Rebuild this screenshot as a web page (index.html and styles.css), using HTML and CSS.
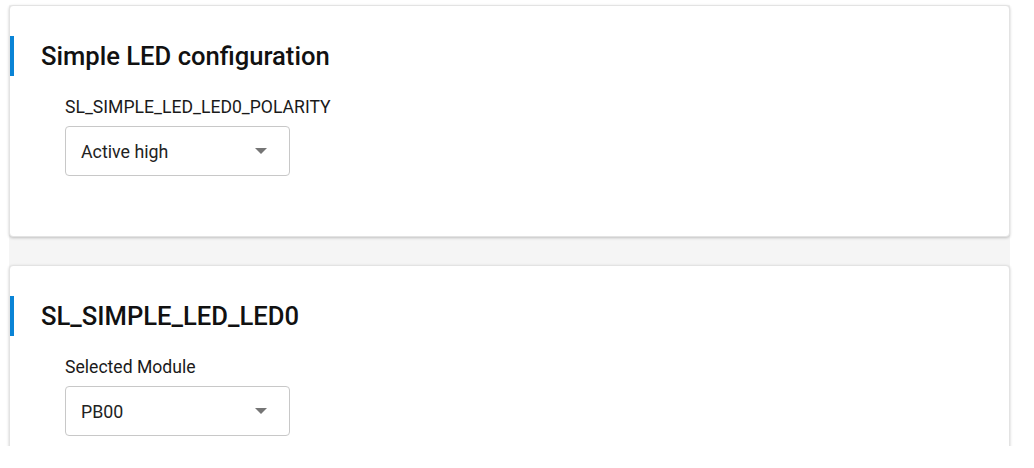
FILE: index.html
```html
<!DOCTYPE html>
<html>
<head>
<meta charset="utf-8">
<link rel="stylesheet" href="styles.css">
</head>
<body>
<div class="viewport">
  <div class="stack">
    <section class="card">
      <h2 class="card-title">Simple LED configuration</h2>
      <div class="field">
        <label class="field-label">SL_SIMPLE_LED_LED0_POLARITY</label>
        <div class="select">
          <span class="select-value">Active high</span>
          <svg class="select-arrow" width="12" height="6" viewBox="0 0 12 6"><path d="M0 0 L12 0 L6 6 Z" fill="#757575"/></svg>
        </div>
      </div>
    </section>
    <section class="card">
      <h2 class="card-title">SL_SIMPLE_LED_LED0</h2>
      <div class="field">
        <label class="field-label">Selected Module</label>
        <div class="select">
          <span class="select-value">PB00</span>
          <svg class="select-arrow" width="12" height="6" viewBox="0 0 12 6"><path d="M0 0 L12 0 L6 6 Z" fill="#757575"/></svg>
        </div>
      </div>
    </section>
  </div>
</div>
</body>
</html>
```
FILE: styles.css
```css
html, body {
  margin: 0;
  padding: 0;
  background: #ffffff;
  font-family: Roboto, "Liberation Sans", Arial, sans-serif;
  color: #1a1a1a;
}
.viewport {
  height: 446px;
  overflow: hidden;
  padding-top: 5px;
  box-sizing: border-box;
}
.stack {
  margin-left: 9px;
  width: 1001px;
  display: flex;
  flex-direction: column;
  gap: 28px;
  background: #f5f5f5;
}
.card {
  background: #ffffff;
  border: 1px solid #e3e3e3;
  border-radius: 4px;
  box-shadow: 0 1px 3px rgba(0,0,0,0.22);
  padding: 30px 0 0 0;
  height: 232px;
  box-sizing: border-box;
  flex: none;
}
.card-title {
  margin: 0;
  height: 40px;
  border-left: 4px solid #0a84d6;
  padding-left: 27px;
  display: flex;
  align-items: center;
  font-size: 25.6px;
  font-weight: 500;
  color: #111111;
}
.field {
  padding: 21px 0 0 55px;
}
.field-label {
  display: block;
  font-size: 17.6px;
  line-height: 20px;
  color: #1a1a1a;
  margin-bottom: 9px;
}
.select {
  width: 225px;
  height: 50px;
  box-sizing: border-box;
  border: 1px solid #c8c8c8;
  border-radius: 4px;
  display: flex;
  align-items: center;
  justify-content: space-between;
  padding: 0 22px 0 15px;
}
.select-value {
  font-size: 17.8px;
  color: #222222;
}
.select-arrow {
  display: block;
}
```
